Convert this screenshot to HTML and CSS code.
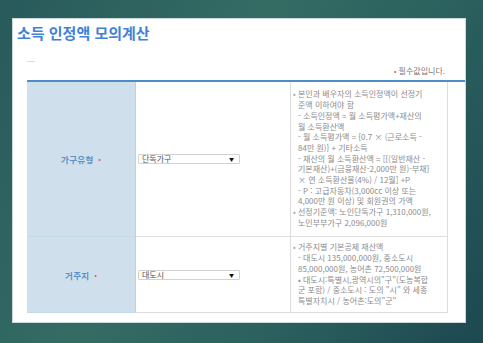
FILE: index.html
```html
<!DOCTYPE html>
<html lang="ko">

<head>
    <meta charset="UTF-8">
    <meta name="viewport" content="width=device-width, initial-scale=1.0">
    <title>소득 인정액 모의계산</title>
    <link rel="stylesheet" href="styles.css">
</head>

<body>
    <div class="panel">
        <h1>소득 인정액 모의계산</h1>
        <div class="divider"></div>
        <p class="required-note"><span class="dot">•</span> 필수값입니다.</p>

        <div class="calc-form">
            <div class="label-cell">
                <label for="householdType">가구유형</label><span class="dot">•</span>
            </div>
            <div class="input-cell">
                <span class="select-wrap">
                    <select id="householdType">
                        <option>단독가구</option>
                        <option>부부가구</option>
                    </select>
                </span>
            </div>
            <div class="note-cell">
                <ul>
                    <li>본인과 배우자의 소득인정액이 선정기<br>준액 이하여야 함<br>- 소득인정액 = 월 소득평가액+재산의<br>월 소득환산액<br>- 월 소득평가액 = {0.7 × (근로소득 -<br>84만 원)} + 기타소득<br>- 재산의 월 소득환산액 = [{(일반재산 -<br>기본재산)+(금융재산-2,000만 원)-부채}<br>× 연 소득환산율(4%) / 12월] +P<br>- P : 고급자동차(3,000cc 이상 또는<br>4,000만 원 이상) 및 회원권의 가액</li>
                    <li>선정기준액: 노인단독가구 1,310,000원,<br>노인부부가구 2,096,000원</li>
                </ul>
            </div>

            <div class="label-cell">
                <label for="residence">거주지</label><span class="dot">•</span>
            </div>
            <div class="input-cell">
                <span class="select-wrap">
                    <select id="residence">
                        <option>대도시</option>
                        <option>중소도시</option>
                        <option>농어촌</option>
                    </select>
                </span>
            </div>
            <div class="note-cell">
                <ul>
                    <li>거주지별 기본공제 재산액<br>- 대도시 135,000,000원, 중소도시<br>85,000,000원, 농어촌 72,500,000원<br>• 대도시:특별시,광역시의"구"(도농복합<br>군 포함) / 중소도시 : 도의 "시" 와 세종<br>특별자치시 / 농어촌:도의"군"</li>
                </ul>
            </div>
        </div>
    </div>
</body>

</html>
```

FILE: styles.css
```css
body {
    font-family: "Noto Sans CJK KR", "Noto Sans", sans-serif;
    height: 100vh;
    margin: 0;
    overflow: hidden;
    background: linear-gradient(120deg, #285a5b 0%, #346c64 40%, #2a5f5d 70%, #1d4850 100%);
}

.panel {
    box-sizing: border-box;
    width: 454px;
    height: 305px;
    margin: 18px 0 0 12px;
    background-color: white;
    border: 1px solid #c9d9dc;
}

h1 {
    margin: 5px 0 0 4px;
    font-size: 15px;
    line-height: 18px;
    font-weight: bold;
    color: #3f82d6;
}

.divider {
    width: 8px;
    height: 1px;
    margin: 19px 0 0 14px;
    background-color: #dddddd;
}

.required-note {
    margin: 4px 20px 0 0;
    font-size: 8px;
    line-height: 10px;
    text-align: right;
    color: #777;
}

.dot {
    color: #e5525a;
    font-size: 7px;
}

.calc-form {
    display: grid;
    grid-template-columns: 109px 155px 157px;
    grid-template-rows: 155px 76px;
    margin: 4px 0 0 14px;
    border-top: 2px solid #4d8dc6;
}

.calc-form > div {
    box-sizing: border-box;
    display: flex;
    align-items: center;
}

.label-cell {
    justify-content: center;
    background-color: #cfe0ec;
    border-right: 1px solid #b3d4e7;
    border-bottom: 1px solid #c3dbe9;
}

.label-cell label {
    font-size: 8.5px;
    font-weight: bold;
    letter-spacing: 0.3px;
    color: #5b91c8;
}

.label-cell .dot {
    margin-left: 5px;
}

.input-cell {
    padding-left: 2px;
    border-right: 1px solid #dddddd;
    border-bottom: 1px solid #dddddd;
}

.select-wrap {
    position: relative;
    display: inline-block;
}

.select-wrap::after {
    content: "▼";
    position: absolute;
    right: 6px;
    top: 2px;
    font-size: 5px;
    line-height: 6px;
    color: #111;
    pointer-events: none;
}

select {
    appearance: none;
    -webkit-appearance: none;
    box-sizing: border-box;
    display: block;
    width: 102px;
    height: 10px;
    padding: 0 0 0 3px;
    border: 1px solid #d2d2d2;
    border-radius: 1px;
    background-color: white;
    font-family: inherit;
    font-size: 8px;
    line-height: 8px;
    color: #555;
}

.note-cell {
    padding-left: 7px;
    border-right: 1px solid #dddddd;
    border-bottom: 1px solid #dddddd;
}

.note-cell ul {
    margin: 0;
    padding: 0;
    list-style: none;
    font-size: 8px;
    line-height: 10.7px;
    color: #8c8c8c;
    white-space: nowrap;
}

.note-cell li::before {
    content: "•";
    display: inline-block;
    width: 5px;
    margin-left: -5px;
    color: #aaa;
}
```
